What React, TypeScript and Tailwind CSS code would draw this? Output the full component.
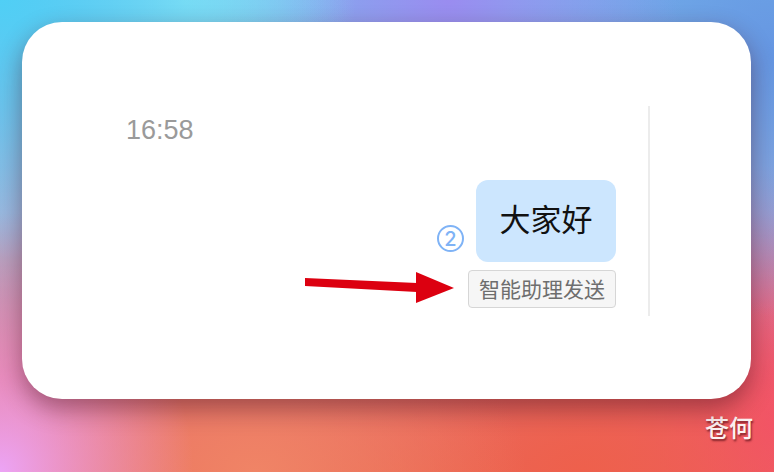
const cjk = "font-['Liberation_Sans','Noto_Sans_CJK_SC',sans-serif]";

// Wallpaper: soft blobs of colour layered over a vertical base gradient
const wallpaper =
  'bg-[radial-gradient(45%_55%_at_0%_0%,#50cff5_0%,transparent_100%),radial-gradient(22%_30%_at_24%_0%,#98e6f4_0%,transparent_100%),radial-gradient(30%_40%_at_58%_0%,#9a8cf0_0%,transparent_100%),radial-gradient(35%_55%_at_100%_12%,#6596e2_0%,transparent_100%),radial-gradient(25%_45%_at_0%_100%,#eca4f6_0%,transparent_100%),radial-gradient(35%_40%_at_33%_100%,#f08466_0%,transparent_100%),radial-gradient(40%_45%_at_75%_100%,#ee604c_0%,transparent_100%),radial-gradient(30%_55%_at_100%_90%,#f44e72_0%,transparent_100%),linear-gradient(to_bottom,#78b8ec_0%,#a8b4dc_45%,#e4707a_80%,#e86a58_100%)]';

function ArrowMark() {
  return (
    <svg
      className="absolute left-[278px] top-[246px]"
      width="160"
      height="40"
      viewBox="0 0 160 40"
    >
      <polygon points="5,10 117,15 117,24 5,18" fill="#dc0010" />
      <polygon points="116,4 154,20 116,35" fill="#dc0010" />
    </svg>
  );
}

function MessageCard() {
  return (
    <div className="relative ml-[22px] flex h-[377px] w-[729px] rounded-[40px] bg-white shadow-[0_10px_24px_rgba(70,15,30,0.45)]">
      <div className="flex flex-1 flex-col pl-[104px] pr-[32px] pt-[95px]">
        <div className="font-['Liberation_Sans',sans-serif] text-[27px] leading-none text-[#9a9a9a]">
          16:58
        </div>

        <div className="mt-[36px] flex flex-col items-end">
          <div className="flex items-end gap-[12px]">
            <div className="mb-[10px] flex h-[27px] w-[27px] items-center justify-center rounded-full border-2 border-[#7fb3f6] font-['Inter',sans-serif] text-[20px] font-medium leading-none text-[#7fb3f6]">
              2
            </div>
            <div
              className={`flex h-[82px] w-[140px] items-center justify-center rounded-[12px] bg-[#cce6fe] text-[31px] text-[#111] ${cjk}`}
            >
              大家好
            </div>
          </div>
          <div
            className={`mt-[8px] flex h-[38px] items-center rounded-[4px] border border-[#d6d6d6] bg-[#f6f6f6] px-[10px] text-[21px] leading-none text-[#6e6e6e] ${cjk}`}
          >
            智能助理发送
          </div>
        </div>
      </div>

      <div className="mt-[84px] h-[210px] w-[2px] bg-[#ececec]" />
      <div className="w-[101px]" />

      <ArrowMark />
    </div>
  );
}

export default function App() {
  return (
    <div className={`flex h-[472px] w-[774px] flex-col overflow-hidden pt-[22px] ${wallpaper}`}>
      <MessageCard />
      <div className="flex justify-end pr-[21px] pt-[18px]">
        <span
          className={`text-[24px] font-medium leading-none text-[#fdf2f2] [text-shadow:1px_2px_2px_rgba(60,0,10,0.6)] ${cjk}`}
        >
          苍何
        </span>
      </div>
    </div>
  );
}
